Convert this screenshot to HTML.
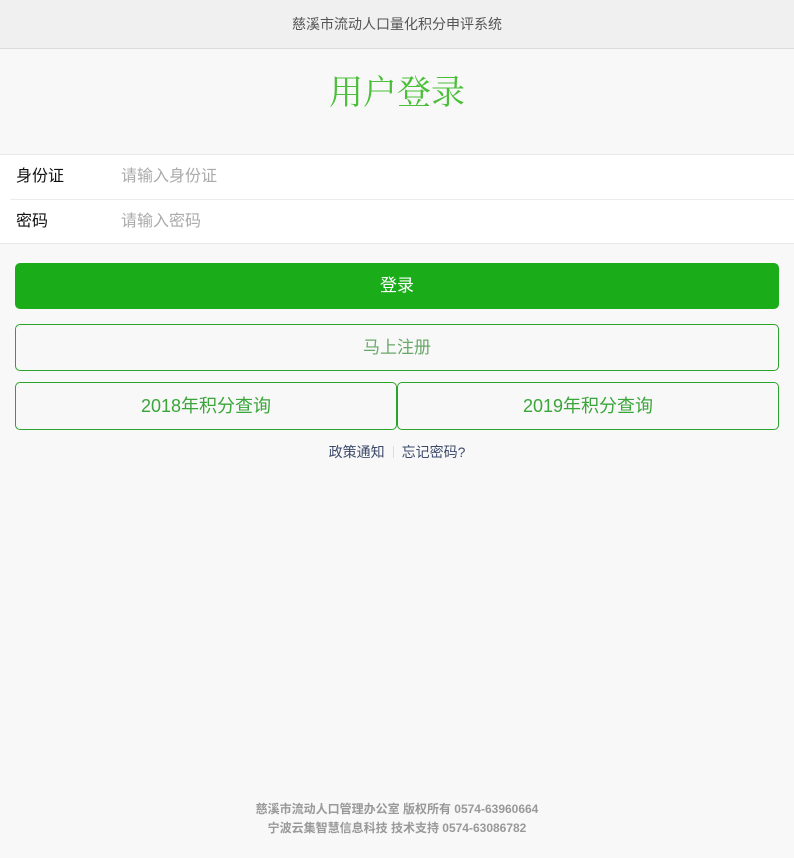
<!DOCTYPE html>
<html><head><meta charset="utf-8"><style>
*{margin:0;padding:0;box-sizing:border-box}
body{width:794px;height:858px;background:#f8f8f8;font-family:"Liberation Sans","Noto Sans CJK SC",sans-serif;position:relative;overflow:hidden}
.hd{height:49px;background:#f0f0f0;border-bottom:1px solid #dcdcdc;text-align:center;line-height:48px;font-size:14px;color:#555}
.t{position:absolute;top:72px;width:100%;text-align:center;font-size:34px;color:#4cbf3a;line-height:44px;font-family:"Liberation Serif","Noto Serif CJK SC",serif}
.form{position:absolute;top:154px;left:0;width:794px;background:#fff;border-top:1px solid #e8e8e8;border-bottom:1px solid #e8e8e8}
.row{height:44px;line-height:44px;font-size:16px;position:relative}
.row+.row{border-top:1px solid #ececec;margin-left:10px}
.row .l{position:absolute;left:16px;color:#111}
.row+.row .l{left:6px}
.row .p{position:absolute;left:121px;color:#aaa}
.row+.row .p{left:111px}
.btn{position:absolute;left:15px;width:764px;height:46px;border-radius:5px;text-align:center;line-height:46px;font-size:17px}
.g{top:263px;background:#1aac19;color:#fff}
.o{border:1px solid #2aa52a;color:#5aa85a;background:#f8f8f8}
.links{position:absolute;top:442px;width:100%;text-align:center;font-size:14px;color:#3d4a6a}
.links span.s{display:inline-block;width:1px;height:12px;background:#ddd;margin:0 8px;vertical-align:-1px}
.ft{position:absolute;top:800px;width:100%;text-align:center;font-size:12px;color:#999;line-height:19px;font-weight:bold}
</style></head><body>
<div class="hd">慈溪市流动人口量化积分申评系统</div>
<div class="t">用户登录</div>
<div class="form">
<div class="row"><span class="l">身份证</span><span class="p">请输入身份证</span></div>
<div class="row"><span class="l">密码</span><span class="p">请输入密码</span></div>
</div>
<div class="btn g">登录</div>
<div class="btn o" style="top:324px;height:47px;color:#6aa86a">马上注册</div>
<div class="btn o" style="top:382px;height:48px;width:382px;color:#3aa53a;font-size:18px">2018年积分查询</div>
<div class="btn o" style="top:382px;height:48px;left:397px;width:382px;color:#3aa53a;font-size:18px">2019年积分查询</div>
<div class="links">政策通知<span class="s"></span>忘记密码?</div>
<div class="ft">慈溪市流动人口管理办公室 版权所有 0574-63960664<br>宁波云集智慧信息科技 技术支持 0574-63086782</div>
</body></html>
